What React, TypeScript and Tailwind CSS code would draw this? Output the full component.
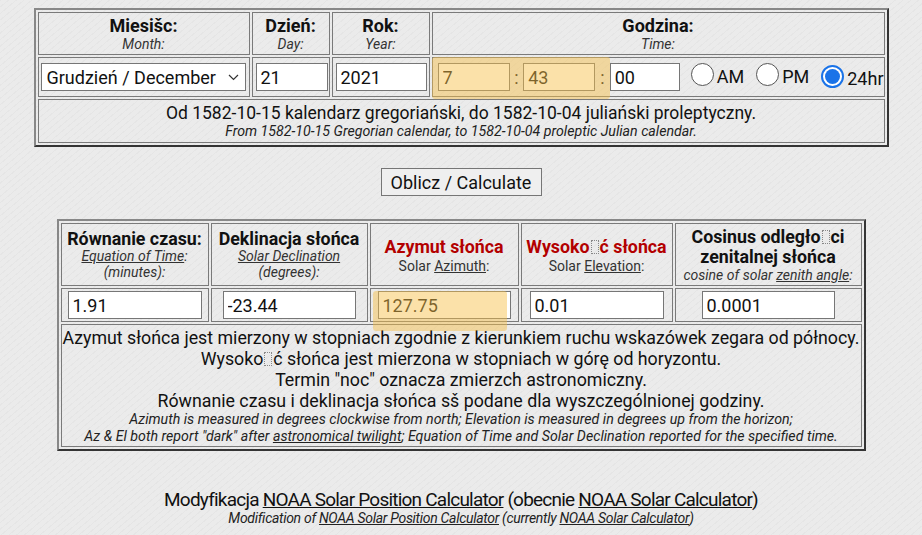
import React from "react";

const font = { fontFamily: "Roboto, 'Noto Sans', 'DejaVu Sans', sans-serif" };

function Radio({ checked, label }: { checked?: boolean; label: string }) {
  return (
    <span className="inline-flex items-center">
      {checked ? (
        <span className="w-[23px] h-[23px] rounded-full border-[2px] border-[#1a73e8] bg-white flex items-center justify-center">
          <span className="w-[15px] h-[15px] rounded-full bg-[#1a73e8]" />
        </span>
      ) : (
        <span className="w-[23px] h-[23px] rounded-full border border-[#555] bg-white" />
      )}
      <span className="ml-[3px] mt-[5px] text-[18px] leading-[22px] text-[#111]">{label}</span>
    </span>
  );
}

function Inp({ value, w }: { value: string; w: string }) {
  return (
    <input
      readOnly
      value={value}
      className={`${w} h-[28px] border border-[#767676] bg-white pl-[4px] text-[18px] text-[#111] outline-none`}
      style={font}
    />
  );
}

const Tofu = () => (
  <span className="inline-block w-[8px] h-[14px] border border-dotted border-[#888] align-[-1px] mx-[1px]" />
);

export default function App() {
  const cell = "border border-[#7a7a7a] p-0";
  return (
    <div
      className="relative w-[922px] h-[535px] overflow-hidden bg-[#ebebeb] bg-[repeating-linear-gradient(140deg,rgba(0,0,0,0.025)_0px,rgba(0,0,0,0.025)_1px,transparent_1px,transparent_5px)] text-[#111]"
      style={font}
    >
      <div className="pt-[8px] flex flex-col items-center">
        {/* top table */}
        <table className="w-[855px] table-fixed border-separate border-spacing-[2px] border-[2px] border-[#888] [border-style:outset]">
          <colgroup>
            <col className="w-[212px]" />
            <col className="w-[78px]" />
            <col className="w-[98px]" />
            <col />
          </colgroup>
          <tbody>
            <tr>
              <td className={`${cell} h-[43px] text-center align-middle`}>
                <div className="font-bold text-[18px] leading-[20px]">Miesišc:</div>
                <div className="italic text-[14px] leading-[16px] text-[#333]">Month:</div>
              </td>
              <td className={`${cell} text-center`}>
                <div className="font-bold text-[18px] leading-[20px]">Dzień:</div>
                <div className="italic text-[14px] leading-[16px] text-[#333]">Day:</div>
              </td>
              <td className={`${cell} text-center`}>
                <div className="font-bold text-[18px] leading-[20px]">Rok:</div>
                <div className="italic text-[14px] leading-[16px] text-[#333]">Year:</div>
              </td>
              <td className={`${cell} text-center`}>
                <div className="font-bold text-[18px] leading-[20px]">Godzina:</div>
                <div className="italic text-[14px] leading-[16px] text-[#333]">Time:</div>
              </td>
            </tr>
            <tr>
              <td className={`${cell} h-[40px] pl-[2px]`}>
                <div className="w-[205px] h-[28px] border border-[#767676] bg-white flex items-center justify-between pl-[5px] pr-[6px] text-[18px]">
                  <span>Grudzień / December</span>
                  <svg width="11" height="7" viewBox="0 0 11 7" fill="none" stroke="#333" strokeWidth="1.2">
                    <path d="M1 1l4.5 4.5L10 1" />
                  </svg>
                </div>
              </td>
              <td className={`${cell} pl-[3px]`}>
                <Inp value="21" w="w-[72px]" />
              </td>
              <td className={`${cell} pl-[3px]`}>
                <Inp value="2021" w="w-[91px]" />
              </td>
              <td className={`${cell} pl-[5px]`}>
                <div className="flex items-center">
                  <Inp value="7" w="w-[72px]" />
                  <span className="w-[18px] text-center text-[18px]">:</span>
                  <Inp value="43" w="w-[72px]" />
                  <span className="w-[19px] text-center text-[18px]">:</span>
                  <Inp value="00" w="w-[70px]" />
                  <span className="ml-[11px]"><Radio label="AM" /></span>
                  <span className="ml-[12px]"><Radio label="PM" /></span>
                  <span className="ml-[12px]"><Radio checked label="24hr" /></span>
                </div>
              </td>
            </tr>
            <tr>
              <td colSpan={4} className={`${cell} h-[44px] text-center`}>
                <div className="text-[17.5px] leading-[20px]">
                  Od 1582-10-15 kalendarz gregoriański, do 1582-10-04 juliański proleptyczny.
                </div>
                <div className="italic text-[14.2px] leading-[17px] text-[#222]">
                  From 1582-10-15 Gregorian calendar, to 1582-10-04 proleptic Julian calendar.
                </div>
              </td>
            </tr>
          </tbody>
        </table>

        <button className="mt-[21px] w-[161px] h-[28px] border border-[#767676] bg-[#efefef] text-[18px] text-[#111]" style={font}>
          Oblicz / Calculate
        </button>

        {/* results table */}
        <table className="mt-[23px] w-[809px] table-fixed border-separate border-spacing-[2px] border-[2px] border-[#888] [border-style:outset]">
          <colgroup>
            <col className="w-[148px]" />
            <col className="w-[157px]" />
            <col className="w-[149px]" />
            <col className="w-[152px]" />
            <col />
          </colgroup>
          <tbody>
            <tr>
              <td className={`${cell} h-[63px] text-center`}>
                <div className="font-bold text-[17.8px] leading-[19px]">Równanie czasu:</div>
                <div className="italic text-[14px] leading-[16px] text-[#333]">
                  <span className="underline">Equation of Time</span>:
                </div>
                <div className="italic text-[14px] leading-[16px] text-[#333]">(minutes):</div>
              </td>
              <td className={`${cell} text-center`}>
                <div className="font-bold text-[17.8px] leading-[19px]">Deklinacja słońca</div>
                <div className="italic text-[14px] leading-[16px] text-[#333]">
                  <span className="underline">Solar Declination</span>
                </div>
                <div className="italic text-[14px] leading-[16px] text-[#333]">(degrees):</div>
              </td>
              <td className={`${cell} text-center`}>
                <div className="font-bold text-[17.8px] leading-[22px] text-[#b30000]">Azymut słońca</div>
                <div className="text-[14px] leading-[16px] text-[#333]">
                  Solar <span className="underline">Azimuth</span>:
                </div>
              </td>
              <td className={`${cell} text-center`}>
                <div className="font-bold text-[17.8px] leading-[22px] text-[#b30000]">
                  Wysoko<Tofu />ć słońca
                </div>
                <div className="text-[14px] leading-[16px] text-[#333]">
                  Solar <span className="underline">Elevation</span>:
                </div>
              </td>
              <td className={`${cell} text-center`}>
                <div className="font-bold text-[17.8px] leading-[21px]">
                  Cosinus odległo<Tofu />ci
                </div>
                <div className="font-bold text-[17.8px] leading-[19px]">zenitalnej słońca</div>
                <div className="italic text-[14px] leading-[18px] text-[#333]">
                  cosine of solar <span className="underline">zenith angle</span>:
                </div>
              </td>
            </tr>
            <tr>
              <td className={`${cell} h-[34px] text-center`}>
                <Inp value="1.91" w="w-[134px]" />
              </td>
              <td className={`${cell} text-center`}>
                <Inp value="-23.44" w="w-[133px]" />
              </td>
              <td className={`${cell} text-center`}>
                <Inp value="127.75" w="w-[133px]" />
              </td>
              <td className={`${cell} text-center`}>
                <Inp value="0.01" w="w-[134px]" />
              </td>
              <td className={`${cell} text-center`}>
                <Inp value="0.0001" w="w-[133px]" />
              </td>
            </tr>
            <tr>
              <td colSpan={5} className={`${cell} h-[123px] text-center`}>
                <div className="text-[17.8px] leading-[21px]">
                  Azymut słońca jest mierzony w stopniach zgodnie z kierunkiem ruchu wskazówek zegara od północy.
                </div>
                <div className="text-[17.8px] leading-[21px]">
                  Wysoko<Tofu />ć słońca jest mierzona w stopniach w górę od horyzontu.
                </div>
                <div className="text-[17.8px] leading-[21px]">
                  Termin "noc" oznacza zmierzch astronomiczny.
                </div>
                <div className="text-[17.8px] leading-[21px]">
                  Równanie czasu i deklinacja słońca sš podane dla wyszczególnionej godziny.
                </div>
                <div className="italic text-[14.2px] leading-[17px] text-[#222]">
                  Azimuth is measured in degrees clockwise from north; Elevation is measured in degrees up from the horizon;
                </div>
                <div className="italic text-[14.2px] leading-[17px] text-[#222]">
                  Az &amp; El both report "dark" after <span className="underline">astronomical twilight</span>; Equation of Time and Solar Declination reported for the specified time.
                </div>
              </td>
            </tr>
          </tbody>
        </table>

        <div className="mt-[38px] text-center">
          <div className="text-[19px] leading-[21px] tracking-[-0.78px] text-[#111]">
            Modyfikacja <span className="underline">NOAA Solar Position Calculator</span> (obecnie{" "}
            <span className="underline">NOAA Solar Calculator</span>)
          </div>
          <div className="italic text-[14px] leading-[16px] tracking-[-0.3px] text-[#222]">
            Modification of <span className="underline">NOAA Solar Position Calculator</span> (currently{" "}
            <span className="underline">NOAA Solar Calculator</span>)
          </div>
        </div>
      </div>

      {/* highlighter marks */}
      <div className="absolute left-[432px] top-[57px] w-[178px] h-[42px] bg-[rgba(247,192,72,0.47)] rounded-[3px] pointer-events-none" />
      <div className="absolute left-[373px] top-[291px] w-[134px] h-[40px] bg-[rgba(247,192,72,0.47)] rounded-[3px] pointer-events-none" />
    </div>
  );
}
